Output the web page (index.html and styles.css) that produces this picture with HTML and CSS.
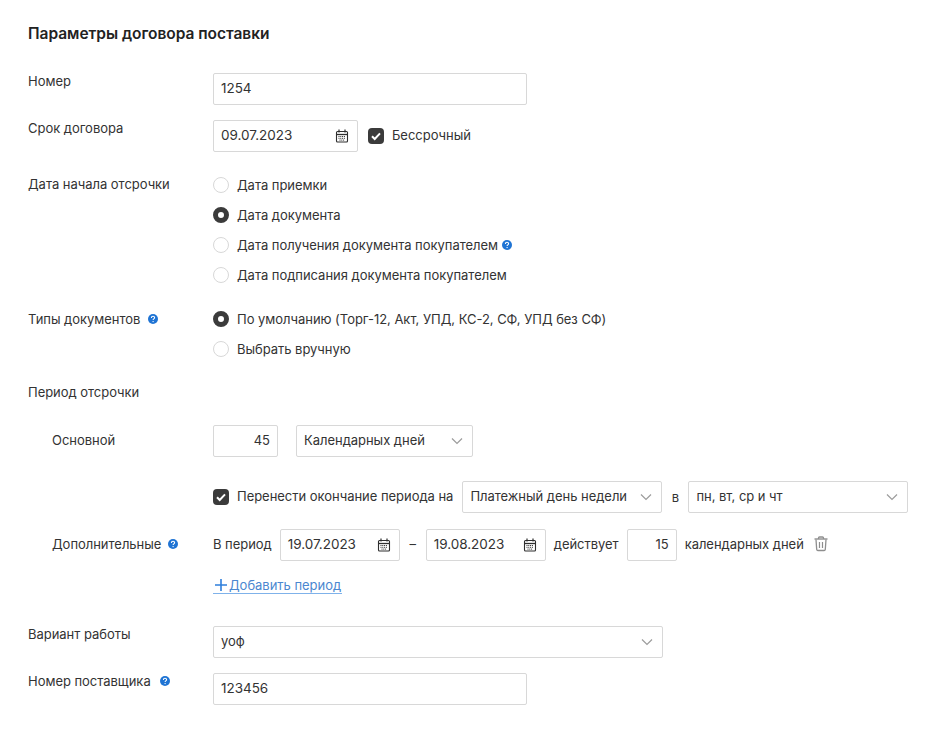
FILE: index.html
```html
<!DOCTYPE html>
<html lang="ru">
<head>
<meta charset="utf-8">
<title>Параметры договора поставки</title>
<link rel="stylesheet" href="styles.css">
</head>
<body>
<svg class="defs" width="0" height="0" aria-hidden="true">
  <defs>
    <symbol id="cal" viewBox="0 0 14 14">
      <path d="M1.5 3.5a1 1 0 0 1 1-1h9a1 1 0 0 1 1 1v8.5a1 1 0 0 1-1 1h-9a1 1 0 0 1-1-1z" fill="none" stroke="#2e2e2e" stroke-width="1.1"/>
      <path d="M1.5 5.5h11" stroke="#2e2e2e" stroke-width="1.3"/>
      <path d="M4 .6v2.8M10 .6v2.8" stroke="#2e2e2e" stroke-width="1.2"/>
      <path d="M3.5 7.5h7M3.5 9.3h7M4.5 11.1h5" stroke="#2e2e2e" stroke-width="1" stroke-dasharray="1 .8"/>
    </symbol>
    <symbol id="chev" viewBox="0 0 12 8">
      <path d="M1 1.5l5 5 5-5" fill="none" stroke="#9c9c9c" stroke-width="1.2"/>
    </symbol>
    <symbol id="help" viewBox="0 0 10 10">
      <circle cx="5" cy="5" r="5" fill="#1f74d4"/>
      <path d="M3.4 3.9c0-1 .7-1.6 1.6-1.6s1.6.6 1.6 1.4c0 1.2-1.5 1.2-1.5 2.3" fill="none" stroke="#fff" stroke-width="1.1"/>
      <circle cx="5.1" cy="7.6" r=".7" fill="#fff"/>
    </symbol>
    <symbol id="tick" viewBox="0 0 16 16">
      <rect width="16" height="16" rx="4" fill="#3b3b3b"/>
      <path d="M4 8.3l2.7 2.7L12 5.4" fill="none" stroke="#fff" stroke-width="2"/>
    </symbol>
  </defs>
</svg>

<main class="page">
  <h1 class="title">Параметры договора поставки</h1>

  <div class="row row-number">
    <div class="label">Номер</div>
    <div class="field inp w-314">1254</div>
  </div>

  <div class="row row-term">
    <div class="label">Срок договора</div>
    <div class="line">
      <div class="field date w-145">09.07.2023<svg class="ic-cal"><use href="#cal"/></svg></div>
      <svg class="check ml-10"><use href="#tick"/></svg>
      <span class="check-text">Бессрочный</span>
    </div>
  </div>

  <div class="row row-start">
    <div class="label label-start">Дата начала отсрочки</div>
    <div class="radios">
      <div class="radio"><i class="dot"></i>Дата приемки</div>
      <div class="radio"><i class="dot on"></i>Дата документа</div>
      <div class="radio"><i class="dot"></i>Дата получения документа покупателем<svg class="help help-r"><use href="#help"/></svg></div>
      <div class="radio"><i class="dot"></i>Дата подписания документа покупателем</div>
    </div>
  </div>

  <div class="row row-types">
    <div class="label">Типы документов<svg class="help help-l"><use href="#help"/></svg></div>
    <div class="radios">
      <div class="radio"><i class="dot on"></i>По умолчанию (Торг-12, Акт, УПД, КС-2, СФ, УПД без СФ)</div>
      <div class="radio"><i class="dot"></i>Выбрать вручную</div>
    </div>
  </div>

  <div class="heading">Период отсрочки</div>

  <div class="row row-main">
    <div class="label sub mid">Основной</div>
    <div class="line">
      <div class="field num w-65">45</div>
      <div class="field sel w-177 ml-18">Календарных дней<svg class="ic-chev"><use href="#chev"/></svg></div>
    </div>
  </div>

  <div class="row row-move">
    <div class="label"></div>
    <div class="line">
      <svg class="check"><use href="#tick"/></svg>
      <span class="check-text">Перенести окончание периода на</span>
      <div class="field sel w-200 ml-9">Платежный день недели<svg class="ic-chev"><use href="#chev"/></svg></div>
      <span class="word w-26">в</span>
      <div class="field sel w-220">пн, вт, ср и чт<svg class="ic-chev"><use href="#chev"/></svg></div>
    </div>
  </div>

  <div class="row row-extra">
    <div class="label sub mid">Дополнительные<svg class="help help-l2"><use href="#help"/></svg></div>
    <div class="line">
      <span class="word-l">В период</span>
      <div class="field date w-120 ml-8">19.07.2023<svg class="ic-cal"><use href="#cal"/></svg></div>
      <span class="word-l w-26">–</span>
      <div class="field date w-120">19.08.2023<svg class="ic-cal"><use href="#cal"/></svg></div>
      <span class="word-l ml-8">действует</span>
      <div class="field num w-50 ml-8">15</div>
      <span class="word-l ml-8">календарных дней</span>
      <svg class="ic-trash" viewBox="0 0 14 16">
        <path d="M.5 3h13" stroke="#8e8e8e" stroke-width="1.4"/>
        <path d="M4.5 3V2a1 1 0 0 1 1-1h3a1 1 0 0 1 1 1v1" fill="none" stroke="#8e8e8e" stroke-width="1.3"/>
        <path d="M2 3.5l.7 10a1.2 1.2 0 0 0 1.2 1h6.2a1.2 1.2 0 0 0 1.2-1l.7-10" fill="none" stroke="#8e8e8e" stroke-width="1.3"/>
        <path d="M5.5 6v6M8.5 6v6" stroke="#8e8e8e" stroke-width="1.2"/>
      </svg>
    </div>
  </div>

  <div class="row row-add">
    <div class="label"></div>
    <a class="add" href="#"><svg class="ic-plus" viewBox="0 0 12 12"><path d="M6 0v12M0 6h12" stroke="#2f7fdc" stroke-width="1.6"/></svg>Добавить период</a>
  </div>

  <div class="row row-variant">
    <div class="label">Вариант работы</div>
    <div class="field sel w-450">уоф<svg class="ic-chev"><use href="#chev"/></svg></div>
  </div>

  <div class="row row-supplier">
    <div class="label">Номер поставщика<svg class="help help-l3"><use href="#help"/></svg></div>
    <div class="field inp w-314">123456</div>
  </div>
</main>
</body>
</html>
```

FILE: styles.css
```css
html, body {
  margin: 0;
  background: #fff;
}
body {
  font-family: Inter, "Noto Sans", sans-serif;
  font-size: 13px;
  line-height: 16px;
  letter-spacing: -0.03px;
  color: #333;
}
.defs { display: block; height: 0; }
.page {
  width: 935px;
  height: 729px;
  box-sizing: border-box;
  padding: 26px 0 0 28px;
  overflow: hidden;
}
.title {
  margin: 0 0 31px;
  font-size: 15.5px;
  line-height: 16px;
  font-weight: 600;
  color: #222;
}
.row { display: flex; align-items: flex-start; }
.label {
  flex: none;
  width: 185px;
  box-sizing: border-box;
  display: flex;
  align-items: center;
}
.label-start { margin-top: -1px; }
.sub { padding-left: 24px; }
.mid { align-self: center; margin-top: -2px; }
.line { display: flex; align-items: center; }
.field {
  box-sizing: border-box;
  height: 32px;
  border: 1px solid #d8d8d8;
  border-radius: 2px;
  display: flex;
  align-items: center;
  flex: none;
  padding: 0 7px 2px;
  position: relative;
  background: #fff;
}
.inp { font-size: 13.5px; }
.date { justify-content: space-between; font-size: 13.5px; }
.num { justify-content: flex-end; padding-bottom: 3px; }
.sel { justify-content: space-between; padding-right: 9px; }
.w-50 { width: 50px; }
.w-65 { width: 65px; }
.w-120 { width: 120px; }
.w-145 { width: 145px; }
.w-177 { width: 177px; }
.w-200 { width: 200px; }
.w-220 { width: 220px; }
.w-314 { width: 314px; }
.w-450 { width: 450px; }
.ml-8 { margin-left: 8px; }
.ml-9 { margin-left: 9px; }
.ml-10 { margin-left: 10px; }
.ml-18 { margin-left: 18px; }
.word { flex: none; text-align: center; }
.w-26 { width: 26px; text-align: center; }
.word-l { flex: none; margin-top: -2px; }
.check { width: 16px; height: 16px; flex: none; }
.check-text { margin-left: 8px; margin-top: -2px; flex: none; }
.ic-cal { width: 14px; height: 14px; flex: none; margin-right: 1px; margin-bottom: -2px; }
.ic-chev { width: 12px; height: 8px; flex: none; margin-bottom: -2px; }
.ic-trash { width: 14px; height: 16px; flex: none; margin-left: 10px; margin-top: -2px; }
.help { width: 10px; height: 10px; flex: none; }
.help-l { margin-left: 8px; }
.help-l2 { margin-left: 7px; }
.help-l3 { margin-left: 9px; }
.help-r { margin-left: 4px; }
.radios { display: flex; flex-direction: column; gap: 14px; }
.radio { display: flex; align-items: center; height: 16px; }
.dot {
  box-sizing: border-box;
  width: 16px;
  height: 16px;
  flex: none;
  margin-right: 8px;
  border: 1px solid #d8d8d8;
  border-radius: 50%;
  background: #fff;
}
.dot.on { border: 5px solid #3b3b3b; }
.heading { margin: 27px 0 0; }
.row-term { margin-top: 15px; }
.row-start { margin-top: 25px; }
.row-types { margin-top: 28px; }
.row-main { margin-top: 25px; }
.row-move { margin-top: 24px; }
.row-extra { margin-top: 16px; }
.row-add { margin-top: 16px; }
.row-variant { margin-top: 32px; }
.row-supplier { margin-top: 15px; }
.add {
  display: flex;
  align-items: center;
  height: 16px;
  color: #4b87d0;
  text-decoration: none;
  border-bottom: 1px solid #7fb2ea;
  gap: 2px;
  padding-right: 1px;
}
.ic-plus { width: 12px; height: 12px; flex: none; margin-left: 2px; }
```
